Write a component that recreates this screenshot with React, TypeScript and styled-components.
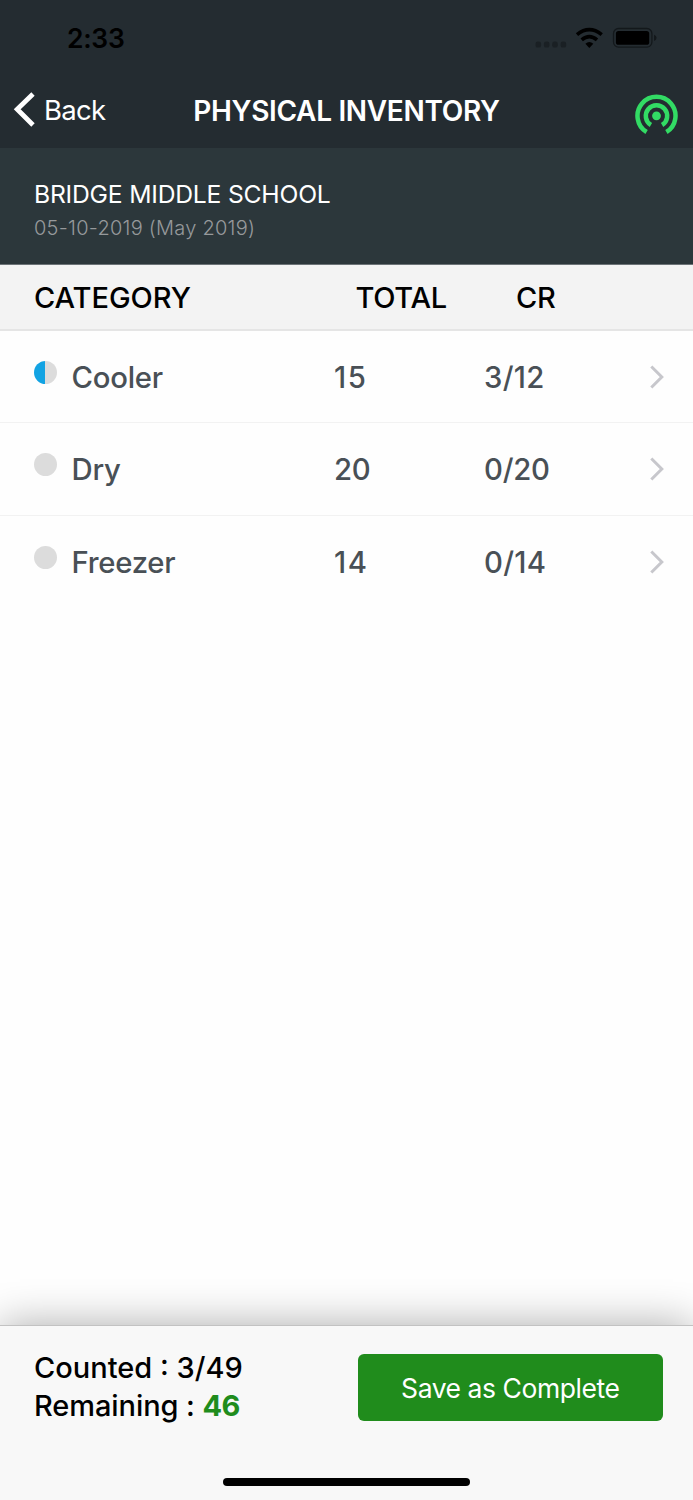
import React from "react";
import styled, { createGlobalStyle } from "styled-components";

const GlobalStyle = createGlobalStyle`
  * { box-sizing: border-box; }
  body { margin: 0; background: #fff; font-family: Inter, "Liberation Sans", sans-serif; }
`;

const Screen = styled.main`
  display: flex;
  flex-direction: column;
  width: 693px;
  height: 1500px;
  overflow: hidden;
  background: #fefefe;
`;

const TopBar = styled.header`
  height: 148px;
  background: #242c31;
`;

const StatusBar = styled.div`
  display: flex;
  justify-content: space-between;
  align-items: center;
  height: 76px;
  padding: 0 36px 0 67px;
`;

const Clock = styled.time`
  color: #000;
  font-size: 26.5px;
  font-weight: 600;
  line-height: 32px;
  letter-spacing: -0.3px;
`;

const StatusIcons = styled.svg`
  display: block;
`;

const NavBar = styled.nav`
  display: grid;
  grid-template-columns: 180px 1fr 180px;
  align-items: center;
  height: 69px;
`;

const BackButton = styled.a`
  display: flex;
  align-items: center;
  gap: 8px;
  margin-top: -2px;
  padding-left: 13px;
  color: #fff;
  font-size: 27.5px;
  letter-spacing: -0.7px;
  line-height: 36px;
`;

const Title = styled.h1`
  margin: 0;
  color: #fff;
  font-size: 28px;
  font-weight: 600;
  line-height: 36px;
  letter-spacing: -0.32px;
  text-align: center;
  white-space: nowrap;
`;

const SignalIcon = styled.svg`
  justify-self: end;
  margin: 9px 15px 0 0;
`;

const SiteInfo = styled.section`
  height: 117px;
  padding: 30px 34px 0;
  background: #2c373b;
  border-bottom: 1px solid #6c7377;
`;

const SiteName = styled.div`
  color: #fff;
  font-size: 24.7px;
  line-height: 32px;
  letter-spacing: -0.22px;
`;

const SiteDate = styled.div`
  margin-top: 2px;
  color: #96999b;
  font-size: 20px;
  font-weight: 300;
  line-height: 32px;
  letter-spacing: 0.25px;
`;

const TableHead = styled.div`
  display: grid;
  grid-template-columns: 321.5px 160.5px 1fr;
  align-items: center;
  height: 66px;
  padding: 0 34px;
  background: #f3f3f3;
  border-bottom: 2px solid #e5e5e5;
  color: #000;
  font-size: 29px;
  font-weight: 450;
`;

const HeadCell = styled.span<{ $tight?: boolean }>`
  letter-spacing: ${(p) => (p.$tight ? "-0.3px" : "-0.05px")};
`;

const List = styled.div`
  flex: 1;
`;

const Row = styled.div`
  display: grid;
  grid-template-columns: 37.5px 262.5px 150px 1fr 16px;
  align-items: center;
  height: 93px;
  padding: 0 28px 0 34px;
  color: #495056;
  font-size: 29.3px;
  font-weight: 450;
  border-bottom: 1px solid #f2f2f2;

  &:first-child { height: 92px; }
  &:last-child { height: 92px; border-bottom: 0; }
`;

const Cell = styled.span<{ $tracking?: number }>`
  padding-top: 2px;
  line-height: 36px;
  letter-spacing: ${(p) => p.$tracking ?? -0.25}px;
`;

const StatusDot = styled.i<{ $partial?: boolean }>`
  width: 23px;
  height: 23px;
  margin-top: -9px;
  border-radius: 50%;
  background: ${(p) =>
    p.$partial ? "linear-gradient(90deg, #12a3e3 50%, #dcdcdc 50%)" : "#dcdcdc"};
`;

const Footer = styled.footer`
  display: flex;
  flex-direction: column;
  justify-content: space-between;
  align-items: center;
  height: 175px;
  padding-bottom: 14px;
  background: #f8f8f8;
  border-top: 1px solid #c2c2c2;
  box-shadow: 0 0 40px rgba(0, 0, 0, 0.33);
`;

const FooterContent = styled.div`
  display: flex;
  justify-content: space-between;
  width: 100%;
  padding: 22px 30.5px 0 34px;
`;

const Counts = styled.div`
  padding-top: 1px;
  color: #000;
  font-size: 29px;
  font-weight: 450;
  line-height: 38px;
`;

const Remaining = styled.strong`
  color: #208c1c;
  font-weight: 700;
  letter-spacing: -0.6px;
`;

const RemainingLine = styled.div`
  letter-spacing: -0.08px;
`;

const SaveButton = styled.button`
  width: 304.5px;
  height: 67px;
  margin-top: 5.5px;
  padding: 1px 0 0;
  border: 0;
  border-radius: 6px;
  background: #208c1c;
  color: #fff;
  font: 400 26.5px Inter, "Liberation Sans", sans-serif;
  letter-spacing: -0.45px;
`;

const HomeIndicator = styled.div`
  width: 247.5px;
  height: 8.5px;
  border-radius: 5px;
  background: #000;
`;

const categories = [
  { name: "Cooler", total: 15, cr: "3/12", partial: true, totalTracking: 1.6, crTracking: 0.3 },
  { name: "Dry", total: 20, cr: "0/20" },
  { name: "Freezer", total: 14, cr: "0/14", totalTracking: 1.6, crTracking: 0.3 },
];

export default function App() {
  return (
    <Screen>
      <GlobalStyle />
      <TopBar>
        <StatusBar>
          <Clock>2:33</Clock>
          <StatusIcons width="122" height="22" viewBox="0 0 122 22">
            <g fill="#1a2024">
              <rect x="0.5" y="14.6" width="5.6" height="6" rx="2.2" />
              <rect x="8.9" y="14.6" width="5.6" height="6" rx="2.2" />
              <rect x="17.2" y="14.6" width="5.6" height="6" rx="2.2" />
              <rect x="25.6" y="14.6" width="5.6" height="6" rx="2.2" />
            </g>
            <g fill="none" stroke="#000" strokeWidth="3.7">
              <path d="M42 7.6 Q54.3 -2.3 66.7 7.6" />
              <path d="M46.7 12.9 Q54.3 6.4 62 12.9" />
            </g>
            <path d="M50.4 16.7 Q54.3 13.3 58.3 16.7 L54.3 20.9Z" fill="#000" />
            <rect x="78.5" y="1.5" width="38.4" height="18.6" rx="5" fill="none" stroke="#13181b" strokeWidth="1.3" />
            <rect x="80.9" y="4" width="33.3" height="13.8" rx="2.6" fill="#000" />
            <path d="M119 7.7 Q121.6 8.5 121.6 10.8 Q121.6 13.1 119 13.9Z" fill="#13181b" />
          </StatusIcons>
        </StatusBar>
        <NavBar>
          <BackButton>
            <svg width="23" height="36" viewBox="0 0 23 36">
              <path d="M20 2 L4.2 17.2 L20 33" fill="none" stroke="#fff" strokeWidth="4.8" />
            </svg>
            Back
          </BackButton>
          <Title>PHYSICAL INVENTORY</Title>
          <SignalIcon width="43" height="42" viewBox="0 0 43 42">
            <g fill="none" stroke="#32db64" strokeWidth="4.5">
              <path d="M11.6 38 A19 19 0 1 1 31.4 38" />
              <path d="M15.9 31 A10.7 10.7 0 1 1 27.1 31" />
            </g>
            <circle cx="21.5" cy="21.8" r="4.4" fill="#32db64" />
          </SignalIcon>
        </NavBar>
      </TopBar>
      <SiteInfo>
        <SiteName>BRIDGE MIDDLE SCHOOL</SiteName>
        <SiteDate>05-10-2019 (May 2019)</SiteDate>
      </SiteInfo>
      <TableHead>
        <HeadCell>CATEGORY</HeadCell>
        <HeadCell $tight>TOTAL</HeadCell>
        <HeadCell $tight>CR</HeadCell>
      </TableHead>
      <List>
        {categories.map((c) => (
          <Row key={c.name}>
            <StatusDot $partial={c.partial} />
            <Cell>{c.name}</Cell>
            <Cell $tracking={c.totalTracking}>{c.total}</Cell>
            <Cell $tracking={c.crTracking}>{c.cr}</Cell>
            <svg width="16" height="24" viewBox="0 0 16 24">
              <path d="M2.3 1.5 L12.8 12 L2.3 22.5" fill="none" stroke="#c7c7cc" strokeWidth="3" />
            </svg>
          </Row>
        ))}
      </List>
      <Footer>
        <FooterContent>
          <Counts>
            <div>Counted : 3/49</div>
            <RemainingLine>Remaining : <Remaining>46</Remaining></RemainingLine>
          </Counts>
          <SaveButton>Save as Complete</SaveButton>
        </FooterContent>
        <HomeIndicator />
      </Footer>
    </Screen>
  );
}
